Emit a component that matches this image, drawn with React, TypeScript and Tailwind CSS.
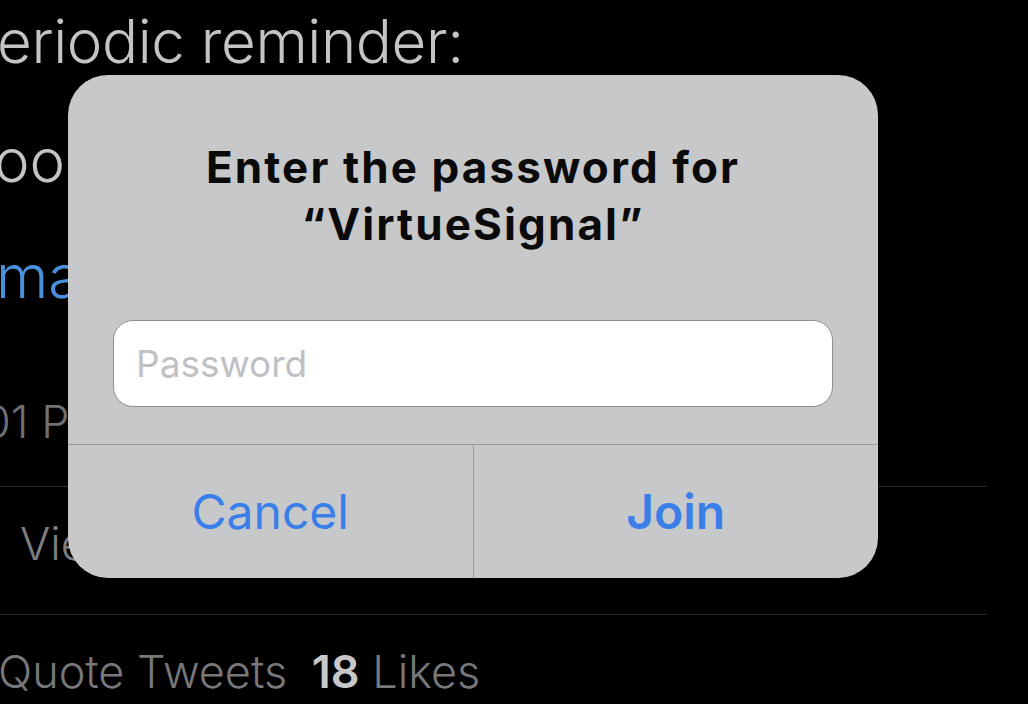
export default function App() {
  return (
    <div className="relative w-[1028px] h-[704px] overflow-hidden bg-black font-['Inter',sans-serif]">
      {/* tweet detail behind the alert */}
      <div className="flex flex-col">
        <div className="mt-[11px] -ml-[3px] h-[60px] text-[60px] leading-none font-light tracking-[-0.4px] text-[#c4c4c6] whitespace-nowrap">
          eriodic reminder:
        </div>
        <div className="mt-[59px] -ml-[6px] h-[60px] text-[60px] leading-none font-light text-[#c4c4c6] whitespace-nowrap">
          oo
        </div>
        <div className="mt-[56px] -ml-[4px] h-[60px] text-[60px] leading-none font-light text-[#4a8fdc] whitespace-nowrap">
          ma
        </div>
        <div className="mt-[93px] -ml-[17px] h-[45px] text-[45px] leading-none font-light text-[#6f6f74] whitespace-nowrap">
          01 P
        </div>
        <div className="mt-[42px] w-[987px] h-px bg-[#2c2c2e]" />
        <div className="mt-[34px] ml-[20px] h-[45px] text-[45px] leading-none font-light text-[#7d7d82] whitespace-nowrap">
          Vie
        </div>
        <div className="mt-[48px] w-[987px] h-px bg-[#2c2c2e]" />
        <div className="mt-[34px] -ml-[2px] h-[45px] text-[45px] leading-none font-light text-[#77777c] whitespace-nowrap">
          Quote Tweets <span className="ml-[12px] font-semibold text-[#c8c8ca]">18</span> Likes
        </div>
      </div>

      {/* alert */}
      <div className="absolute left-[68px] top-[75px] w-[810px] h-[503px] rounded-[40px] bg-[#c7c8ca] flex flex-col overflow-hidden">
        <div className="pt-[64px] text-center text-[44px] leading-[57px] font-bold text-[#0a0a0a] tracking-[2.1px]">
          Enter the password for
          <br />
          “VirtueSignal”
        </div>
        <div className="mt-[67px] mx-[45px] h-[87px] rounded-[20px] border border-[#8e8e93] bg-white flex items-center pl-[22px]">
          <span className="text-[37px] text-[#c0c0c4] font-normal">Password</span>
        </div>
        <div className="mt-[37px] h-px bg-[#9a9a9e]" />
        <div className="flex flex-1">
          <div className="flex-1 flex items-center justify-center text-[48px] text-[#3a7eea] font-normal">
            Cancel
          </div>
          <div className="w-px bg-[#9a9a9e]" />
          <div className="flex-1 flex items-center justify-center text-[48px] text-[#3a7eea] font-semibold">
            Join
          </div>
        </div>
      </div>
    </div>
  );
}
